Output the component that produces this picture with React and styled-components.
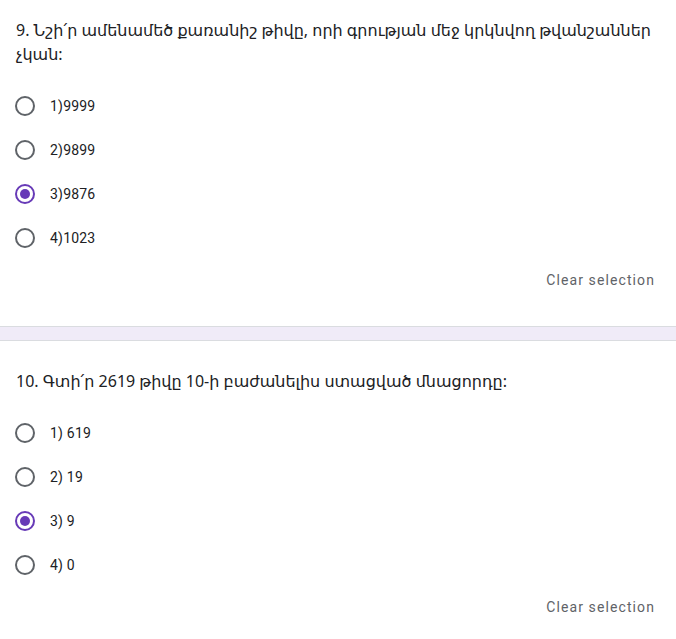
import React from "react";
import styled, { createGlobalStyle } from "styled-components";

const Global = createGlobalStyle`
  html, body { margin: 0; padding: 0; background: #fff; }
  body { font-family: Roboto, "Noto Sans", "DejaVu Sans", sans-serif; }
`;

const Page = styled.div`
  display: flex;
  flex-direction: column;
  width: 676px;
`;

const Question = styled.section`
  display: flex;
  flex-direction: column;
  padding: ${(p) => p.$top}px 0 ${(p) => p.$bottom}px 0;
`;

const Title = styled.div`
  padding: 0 16px;
  font-family: "Noto Sans", "DejaVu Sans", sans-serif;
  font-size: 16px;
  line-height: 24px;
  color: #202124;
  margin-bottom: ${(p) => p.$gap}px;
`;

const Options = styled.div`
  display: flex;
  flex-direction: column;
`;

const Option = styled.label`
  display: flex;
  align-items: center;
  height: 44px;
  padding-left: 15px;
  gap: 15px;
`;

const Radio = styled.span`
  box-sizing: border-box;
  width: 20px;
  height: 20px;
  border-radius: 50%;
  border: 2px solid ${(p) => (p.$checked ? "#673ab7" : "#5f6368")};
  display: flex;
  align-items: center;
  justify-content: center;
  &::after {
    content: "";
    width: 10px;
    height: 10px;
    border-radius: 50%;
    background: #673ab7;
    display: ${(p) => (p.$checked ? "block" : "none")};
  }
`;

const Label = styled.span`
  font-family: Roboto, sans-serif;
  font-size: 14px;
  color: #202124;
  letter-spacing: 0.2px;
`;

const Footer = styled.div`
  display: flex;
  justify-content: flex-end;
  align-items: center;
  height: 40px;
  padding-right: 21px;
`;

const Clear = styled.span`
  font-family: Roboto, sans-serif;
  font-size: 14px;
  color: #5f6368;
  letter-spacing: 1.1px;
`;

const Divider = styled.div`
  height: 13px;
  background: #f0ebf8;
  border-top: 1px solid #dadce0;
  border-bottom: 1px solid #dadce0;
`;

const questions = [
  {
    title:
      "9. Նշի՛ր ամենամեծ քառանիշ թիվը, որի գրության մեջ կրկնվող թվանշաններ չկան:",
    options: ["1)9999", "2)9899", "3)9876", "4)1023"],
    checked: 2,
    top: 18,
    bottom: 26,
    gap: 18,
  },
  {
    title: "10. Գտի՛ր 2619 թիվը 10-ի բաժանելիս ստացված մնացորդը:",
    options: ["1) 619", "2) 19", "3) 9", "4) 0"],
    checked: 2,
    top: 28,
    bottom: 20,
    gap: 18,
  },
];

export default function App() {
  return (
    <Page>
      <Global />
      {questions.map((q, i) => (
        <React.Fragment key={i}>
          {i > 0 && <Divider />}
          <Question $top={q.top} $bottom={q.bottom}>
            <Title $gap={q.gap}>{q.title}</Title>
            <Options>
              {q.options.map((o, j) => (
                <Option key={j}>
                  <Radio $checked={j === q.checked} />
                  <Label>{o}</Label>
                </Option>
              ))}
            </Options>
            <Footer>
              <Clear>Clear selection</Clear>
            </Footer>
          </Question>
        </React.Fragment>
      ))}
    </Page>
  );
}
